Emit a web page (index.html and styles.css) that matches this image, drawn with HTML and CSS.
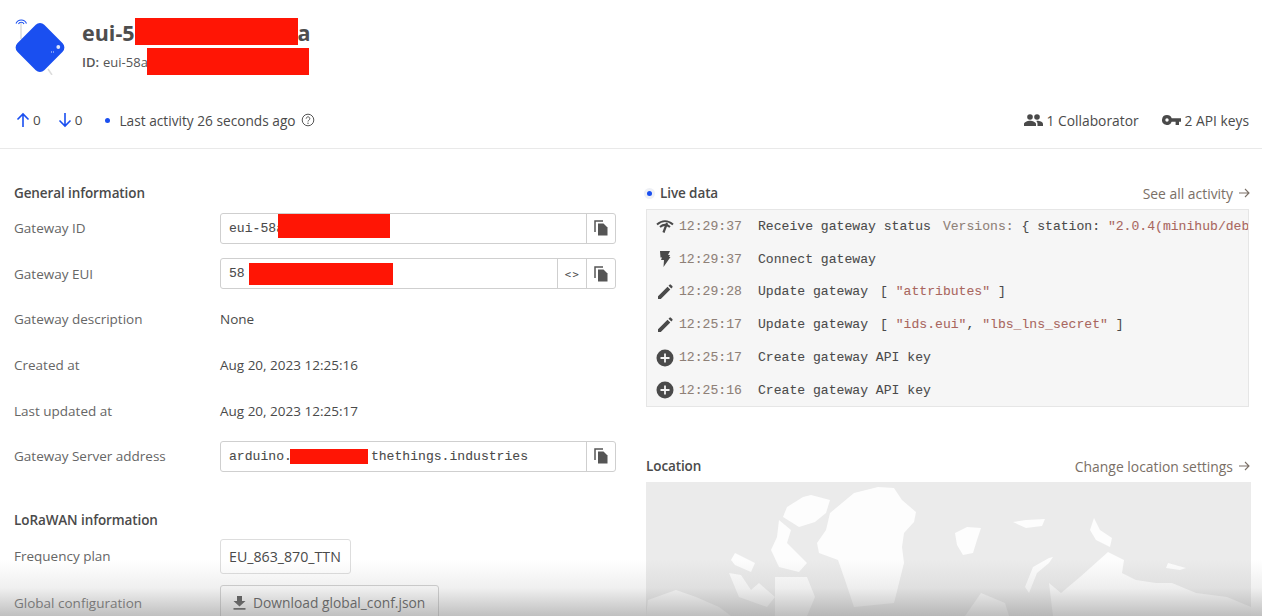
FILE: index.html
```html
<!DOCTYPE html>
<html lang="en">
<head>
<meta charset="utf-8">
<title>Gateway overview</title>
<link rel="stylesheet" href="styles.css">
</head>
<body>
<header class="head">
  <div class="title-row">
    <svg class="logo" width="64" height="60" viewBox="0 0 64 60">
      <path d="M8 8V24M35 54 39 60" stroke="#dcdcdc" stroke-width="1.500" fill="none"/>
      <path d="M3 8.500a5.700 5.700 0 0 1 10.500 0M5.500 9a3 3 0 0 1 5.500 0" stroke="#1a4ff0" stroke-width="1.100" fill="none"/>
      <rect x="8" y="13.500" width="38" height="38" rx="6" transform="rotate(45 27 32.500)" fill="#1a4ff0"/>
      <circle cx="45.300" cy="32" r="1.900" fill="#dfe6fb"/>
      <path d="M38 37h1M40 37h1" stroke="#dfe6fb"/>
    </svg>
    <div class="title-text">
      <h1 class="name">eui-5<span class="red red-name"></span>a</h1>
      <div class="id"><b>ID:</b> eui-58a<span class="red red-id"></span></div>
    </div>
  </div>
  <div class="stats">
    <div class="stats-left">
      <span class="stat">
        <svg width="14" height="16" viewBox="0 0 14 16"><path d="M7 15V2M1.500 7.500 7 2l5.500 5.500" stroke="#1a4ff0" stroke-width="1.600" fill="none"/></svg>0</span>
      <span class="stat">
        <svg width="14" height="16" viewBox="0 0 14 16"><path d="M7 1v13M1.500 8.500 7 14l5.500-5.500" stroke="#1a4ff0" stroke-width="1.600" fill="none"/></svg>0</span>
      <span class="activity"><i class="dot"></i>Last activity 26 seconds ago
        <svg width="14" height="14" viewBox="0 0 14 14"><circle cx="7" cy="7" r="5.800" stroke="#555" fill="none"/><path d="M5.200 5.600a1.800 1.800 0 1 1 2.700 1.600c-.6.400-.9.700-.9 1.300" stroke="#555" fill="none"/><circle cx="7" cy="10.300" r=".7" fill="#555"/></svg>
      </span>
    </div>
    <div class="stats-right">
      <span class="stat-link">
        <svg width="19" height="12" viewBox="0 0 19 12"><circle cx="6" cy="3" r="2.800" fill="#4a4a4a"/><circle cx="13" cy="3" r="2.800" fill="#4a4a4a"/><path d="M0 12V10c0-2 3.500-3.300 6-3.300S12 8 12 10v2zM13.500 12V9.800c0-1.100-.5-2-1.300-2.800.4-.1.800-.2 1-.2 2.300 0 5.800 1.200 5.800 3.200v2z" fill="#4a4a4a"/></svg>1 Collaborator</span>
      <span class="stat-link">
        <svg width="19" height="10" viewBox="0 0 19 10"><path fill-rule="evenodd" d="M5 0a5 5 0 0 1 4.700 3.300H19v3.400h-2V10h-3.400V6.700H9.700A5 5 0 1 1 5 0zm0 3.300a1.700 1.700 0 1 0 0 3.400 1.700 1.700 0 0 0 0-3.400z" fill="#4a4a4a"/></svg>2 API keys</span>
    </div>
  </div>
</header>

<main class="content">
  <section class="col-left">
    <h2 class="sec-title">General information</h2>
    <div class="row">
      <span class="label">Gateway ID</span>
      <div class="field">
        <span class="field-val">eui-58a<span class="red red-f1"></span></span>
        <span class="field-btn"><svg class="copy" width="14" height="16" viewBox="0 0 14 16"><path d="M1 12V1h8" stroke="#555" stroke-width="1.500" fill="none"/><path d="M4 3.500h5.500L13.500 7.500V15.500H4z" fill="#555"/></svg></span>
      </div>
    </div>
    <div class="row">
      <span class="label">Gateway EUI</span>
      <div class="field">
        <span class="field-val">58<span class="red red-f2"></span></span>
        <span class="field-btn code">&lt;&gt;</span>
        <span class="field-btn"><svg class="copy" width="14" height="16" viewBox="0 0 14 16"><path d="M1 12V1h8" stroke="#555" stroke-width="1.500" fill="none"/><path d="M4 3.500h5.500L13.500 7.500V15.500H4z" fill="#555"/></svg></span>
      </div>
    </div>
    <div class="row"><span class="label">Gateway description</span><span class="val">None</span></div>
    <div class="row"><span class="label">Created at</span><span class="val">Aug 20, 2023 12:25:16</span></div>
    <div class="row"><span class="label">Last updated at</span><span class="val">Aug 20, 2023 12:25:17</span></div>
    <div class="row">
      <span class="label">Gateway Server address</span>
      <div class="field">
        <span class="field-val">arduino.<span class="red red-f3"></span>thethings.industries</span>
        <span class="field-btn"><svg class="copy" width="14" height="16" viewBox="0 0 14 16"><path d="M1 12V1h8" stroke="#555" stroke-width="1.500" fill="none"/><path d="M4 3.500h5.500L13.500 7.500V15.500H4z" fill="#555"/></svg></span>
      </div>
    </div>
    <h2 class="sec-title sec-lora">LoRaWAN information</h2>
    <div class="row row-plan"><span class="label">Frequency plan</span><span class="plan">EU_863_870_TTN</span></div>
    <div class="row row-dl"><span class="label">Global configuration</span>
      <span class="download"><svg width="13" height="14" viewBox="0 0 13 14"><path d="M4 0h5v5h3.500L6.500 10.500.5 5H4zM.5 12h12v1.800H.5z" fill="#4a4a4a"/></svg>Download global_conf.json</span>
    </div>
  </section>

  <section class="col-right">
    <div class="sec-head">
      <h2 class="sec-title live"><i class="live-dot"></i>Live data</h2>
      <span class="more">See all activity<svg width="11" height="10" viewBox="0 0 11 10"><path d="M0 5h10M6 1l4 4-4 4" stroke="#7a6f66" stroke-width="1.100" fill="none"/></svg></span>
    </div>
    <div class="events">
      <div class="ev">
        <svg class="ev-ic" width="18" height="14" viewBox="0 0 18 14"><path d="M1 5.500C6 1 12 1 17 5.500M4 8c3.500-3 6.500-3 10 0" stroke="#4a4a4a" stroke-width="2" fill="none"/><path d="M7.500 13.500 11 4" stroke="#4a4a4a" stroke-width="2.200"/></svg>
        <time>12:29:37</time><span class="ev-name">Receive gateway status</span><span class="ev-data"><span class="muted">Versions:</span> { station: <span class="str">"2.0.4(minihub/deb</span></span>
      </div>
      <div class="ev">
        <svg class="ev-ic" width="18" height="16" viewBox="0 0 18 16"><path d="M4 0h10l-2 4h2l-1 2h1.500L7.500 16 8 9H5l1-2.500H4.500z" fill="#4a4a4a"/></svg>
        <time>12:29:37</time><span class="ev-name">Connect gateway</span>
      </div>
      <div class="ev">
        <svg class="ev-ic" width="18" height="16" viewBox="0 0 18 16"><path d="M2 12.200 11.500 2.700l2.800 2.800-9.500 9.500H2zM12.500 1.700l1-1a1 1 0 0 1 1.400 0l1.400 1.400a1 1 0 0 1 0 1.400l-1 1z" fill="#4a4a4a"/></svg>
        <time>12:29:28</time><span class="ev-name">Update gateway</span><span class="ev-data">[ <span class="str">"attributes"</span> ]</span>
      </div>
      <div class="ev">
        <svg class="ev-ic" width="18" height="16" viewBox="0 0 18 16"><path d="M2 12.200 11.500 2.700l2.800 2.800-9.500 9.500H2zM12.500 1.700l1-1a1 1 0 0 1 1.400 0l1.400 1.400a1 1 0 0 1 0 1.400l-1 1z" fill="#4a4a4a"/></svg>
        <time>12:25:17</time><span class="ev-name">Update gateway</span><span class="ev-data">[ <span class="str">"ids.eui"</span>, <span class="str">"lbs_lns_secret"</span> ]</span>
      </div>
      <div class="ev">
        <svg class="ev-ic" width="18" height="18" viewBox="0 0 18 18"><circle cx="9" cy="9" r="8.500" fill="#4a4a4a"/><path d="M9 4.500v9M4.500 9h9" stroke="#f5f5f5" stroke-width="1.800"/></svg>
        <time>12:25:17</time><span class="ev-name">Create gateway API key</span>
      </div>
      <div class="ev">
        <svg class="ev-ic" width="18" height="18" viewBox="0 0 18 18"><circle cx="9" cy="9" r="8.500" fill="#4a4a4a"/><path d="M9 4.500v9M4.500 9h9" stroke="#f5f5f5" stroke-width="1.800"/></svg>
        <time>12:25:16</time><span class="ev-name">Create gateway API key</span>
      </div>
    </div>
    <div class="sec-head loc-head">
      <h2 class="sec-title">Location</h2>
      <span class="more">Change location settings<svg width="11" height="10" viewBox="0 0 11 10"><path d="M0 5h10M6 1l4 4-4 4" stroke="#7a6f66" stroke-width="1.100" fill="none"/></svg></span>
    </div>
    <div class="map">
      <svg width="605" height="134" viewBox="0 0 605 134">
        <g fill="#fdfdfd">
          <path d="M232 5 248 6 256 18 270 30 268 40 258 51 256 65 258 81 252 105 248 121 208 125 200 101 192 78 173 71 171 61 180 48 184 31 208 11z"/>
          <path d="M165 13 184 18 180 31 169 40 153 45 137 35 141 25 157 15z"/>
          <path d="M133 38 145 48 141 61 161 81 153 90 133 85 125 68 131 55z"/>
          <path d="M89 71 109 81 105 90 89 83 85 78z"/>
          <path d="M83 91 95 93 105 108 113 101 129 115 121 125 93 115z"/>
          <path d="M129 95 161 95 169 115 161 134H129z"/>
          <path d="M2 118 30 108 50 115 73 125 85 134H0z"/>
          <path d="M309 51 321 45 335 46 331 58 327 71 317 73 311 63z"/>
          <path d="M367 40 380 38 399 37 396 44 380 46z"/>
          <path d="M407 75 403 76 387 85 379 105 383 111 391 91 403 81z"/>
          <path d="M448 36 454 48 466 56 464 65 450 58 444 48z"/>
          <path d="M407 134 403 101 415 111 434 95 462 70 478 78 476 91 490 98 510 101 526 101 550 111 581 115 605 125V134z"/>
          <path d="M522 81 540 86 534 88 520 86z"/>
          <path d="M319 134 335 111 359 121 363 134z"/>
        </g>
      </svg>
    </div>
  </section>
</main>
<div class="fade"></div>
</body>
</html>
```
FILE: styles.css
```css
* { box-sizing: border-box; }
html, body { margin: 0; height: 616px; overflow: hidden; }
body {
  width: 1262px;
  background: #fff;
  color: #4a4a4a;
  font-family: "Open Sans", "Noto Sans", sans-serif;
  font-size: 13.5px;
  position: relative;
}
.head { height: 149px; border-bottom: 1px solid #e9e9e9; padding: 15px 13px 0 13px; display: flex; flex-direction: column; }
.title-row { display: flex; align-items: flex-start; gap: 5px; height: 72px; }
.logo { flex: none; }
.title-text { padding-top: 3px; }
.name { margin: 0; font-size: 21.500px; line-height: 30px; font-weight: 700; color: #4e4e4e; display: flex; align-items: center; height: 30px; }
.id { font-size: 13px; line-height: 24px; color: #555; display: flex; align-items: center; }
.id b { margin-right: 4px; font-weight: 600; }
.red { display: inline-block; background: #ff1505; }
.red-name { width: 163px; height: 27px; margin-bottom: 3px; }
.red-id { width: 162px; height: 27px; margin-left: -1px; }
.stats { display: flex; justify-content: space-between; align-items: center; height: 24px; margin-top: 21px; padding-left: 3px; }
.stats-left, .stats-right { display: flex; align-items: center; }
.stat { display: flex; align-items: center; gap: 3px; margin-right: 17px; font-size: 13.500px; }
.activity { display: flex; align-items: center; gap: 5px; margin-left: 6px; font-size: 13.700px; }
.dot { width: 5px; height: 5px; border-radius: 50%; background: #1a4ff0; margin-right: 4px; }
.stat-link { display: flex; align-items: center; gap: 4px; margin-left: 23px; font-size: 13.800px; }
.content { display: flex; padding: 32px 12px 0 14px; }
.col-left { width: 602px; flex: none; }
.col-right { width: 604px; margin-left: 30px; flex: none; }
.sec-title { margin: 0; font-size: 13.500px; font-weight: 600; line-height: 24px; color: #4a4a4a; letter-spacing: -.1px; }
.sec-lora { margin-top: 36px; }
.row { display: flex; align-items: center; height: 31px; margin-bottom: 14.700px; }
.sec-title + .row { margin-top: 7.500px; }
.sec-lora + .row-plan { margin-top: 7px; height: 35px; margin-bottom: 11px; }
.row-dl { height: 36px; }
.label { width: 206px; flex: none; color: #666; }
.val { color: #4a4a4a; }
.field { flex: 1; height: 31px; border: 1px solid #cfcfcf; border-radius: 3px; display: flex; align-items: center; min-width: 0; }
.field-val { flex: 1; padding-left: 8px; font-family: "Liberation Mono", monospace; font-size: 13.100px; display: flex; align-items: center; white-space: pre; -webkit-text-stroke: .08px; }
.red-f1 { width: 112px; height: 24px; margin-left: -6px; margin-bottom: 4px; }
.red-f2 { width: 144px; height: 22px; margin-left: 4px; }
.red-f3 { width: 78px; height: 15px; margin-left: -2px; margin-right: 3px; }
.field-btn { width: 29px; height: 29px; border-left: 1px solid #cfcfcf; display: flex; align-items: center; justify-content: center; flex: none; }
.code { font-family: "DejaVu Sans Mono", monospace; font-size: 10.500px; letter-spacing: 1.500px; padding-left: 1px; }
.plan { border: 1px solid #ddd; border-radius: 3px; height: 35px; width: 131px; padding: 0 8px; display: flex; align-items: center; font-size: 14.200px; white-space: nowrap; }
.download { border: 1px solid #cfcfcf; border-radius: 3px; height: 36px; width: 219px; padding: 0 12px; display: flex; align-items: center; gap: 7px; font-size: 13.800px; white-space: nowrap; }
.sec-head { display: flex; justify-content: space-between; align-items: center; height: 24px; }
.live { display: flex; align-items: center; }
.live-dot { width: 5px; height: 5px; border-radius: 50%; background: #1a4ff0; box-shadow: 0 0 0 3px #eef0f5; margin: 0 8px 0 1px; }
.more { color: #7a6f66; font-size: 13.900px; display: flex; align-items: center; gap: 6px; }
.events { margin-top: 4px; background: #f6f6f6; border: 1px solid #e6e6e6; height: 198px; overflow: hidden; width: 603px; }
.ev { height: 32.800px; display: flex; align-items: center; padding-left: 9px; font-family: "Liberation Mono", monospace; font-size: 13.100px; white-space: nowrap; -webkit-text-stroke: .08px; }
.ev-ic { flex: none; margin-right: 5px; width: 18px; }
.ev time { color: #8e8077; width: 79px; flex: none; }
.ev-name { color: #4a4a4a; }
.ev-data { margin-left: 12px; color: #4a4a4a; }
.muted { color: #8e8077; }
.str { color: #a9665e; }
.loc-head { margin-top: 47px; }
.map { margin-top: 4px; background: #ebebeb; height: 134px; width: 605px; display: flex; }
.fade { position: absolute; left: 0; right: 0; bottom: 0; height: 56px; pointer-events: none; background: linear-gradient(to bottom, rgba(180,180,180,0), rgba(170,170,170,.18) 50%, rgba(140,140,140,.55)); }
```
